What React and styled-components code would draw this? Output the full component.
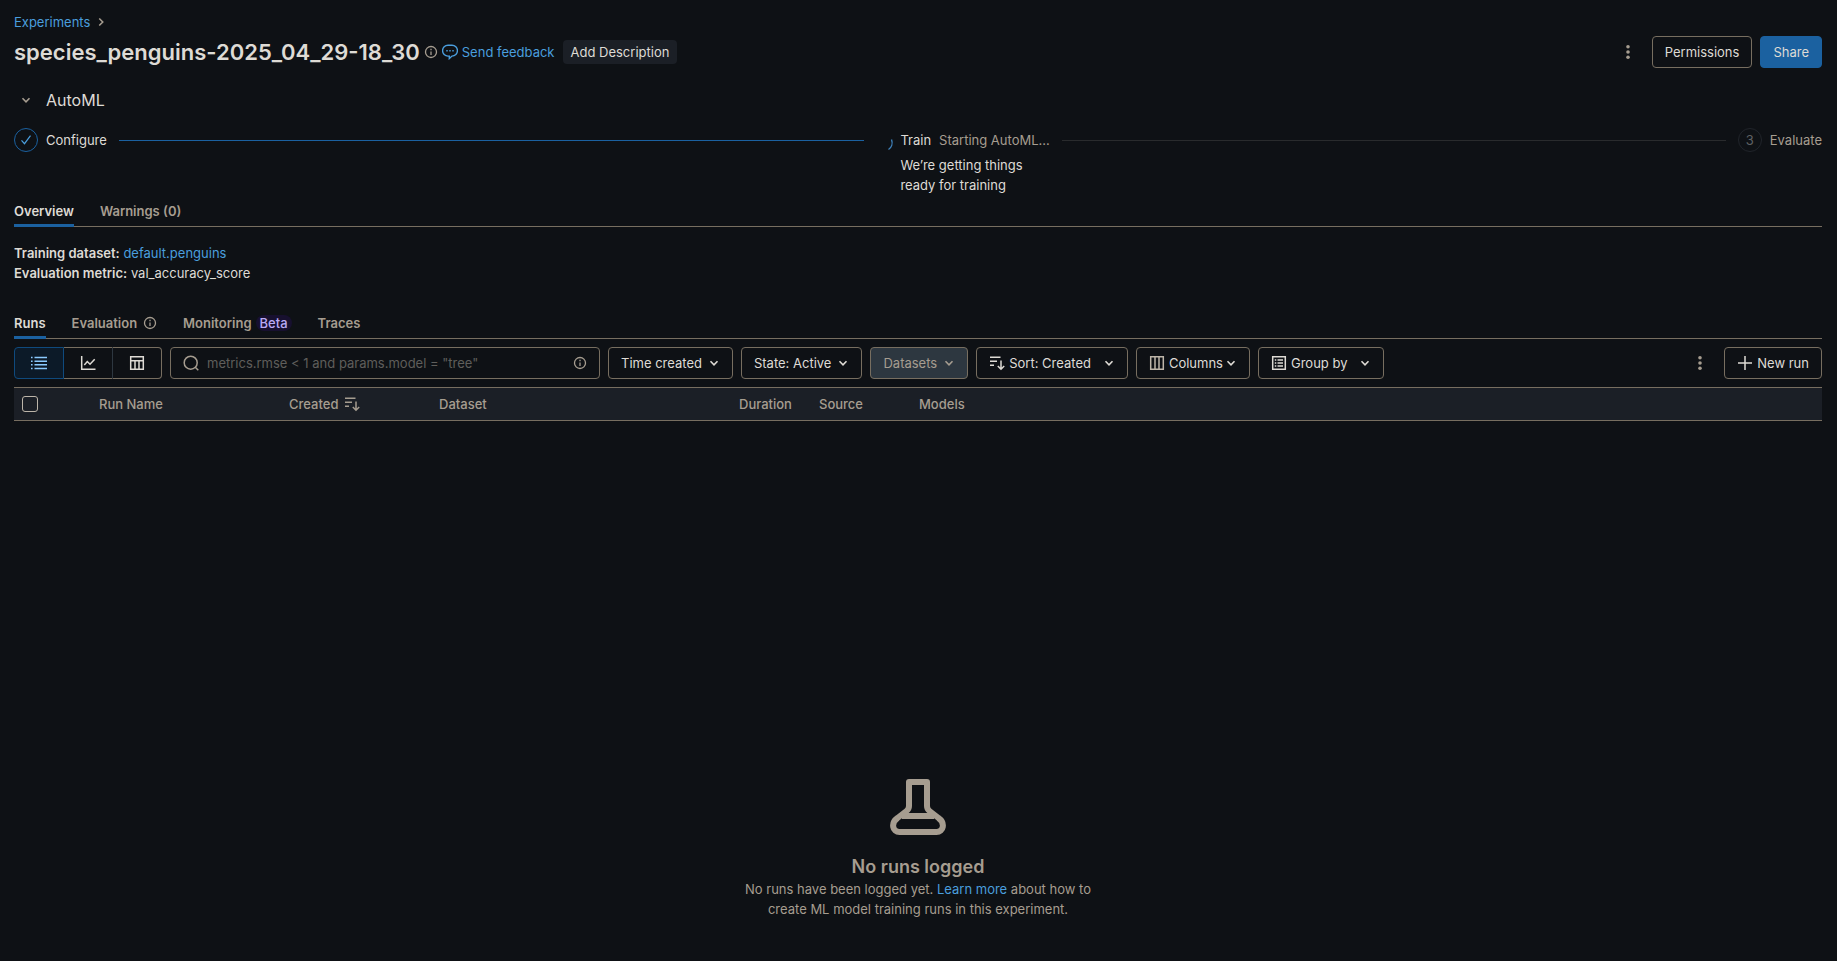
import React from "react";
import styled, { createGlobalStyle } from "styled-components";

const c = {
  bg: "#0e1115",
  text: "#dedbd5",
  muted: "#a69d90",
  line: "#776e60",
  link: "#4a9edd",
  blue: "#1b61a0",
  header: "#1b1f26",
};

const Global = createGlobalStyle`
  *, *::before, *::after { box-sizing: border-box; }
  body {
    margin: 0;
    background: ${c.bg};
    color: ${c.text};
    font: 400 13px/20px Inter, "Liberation Sans", sans-serif;
  }
  h1, h2, p, ol { margin: 0; padding: 0; }
  button, input { font: inherit; color: inherit; }
  svg { display: block; flex: none; }
`;

const Page = styled.div`
  min-height: 100vh;
  display: flex;
  flex-direction: column;
  padding: 12px 15px 0 14px;
`;

const Link = styled.a`
  color: ${c.link};
  text-decoration: none;
`;

const Breadcrumb = styled.nav`
  display: flex;
  align-items: center;
  gap: 4px;
  height: 20px;
  color: ${c.muted};
`;

const TitleRow = styled.header`
  display: flex;
  align-items: center;
  height: 32px;
  margin-top: 4px;
`;

const Title = styled.h1`
  font-size: 22px;
  line-height: 28px;
  font-weight: 600;
  margin-right: 4px;
  white-space: nowrap;
`;

const TitleInfo = styled.span`
  color: ${c.muted};
`;

const FeedbackLink = styled(Link)`
  display: flex;
  align-items: center;
  gap: 4px;
  margin: 0 8px 0 4px;
`;

const Spacer = styled.div`
  flex: 1;
`;

const Button = styled.button`
  display: inline-flex;
  align-items: center;
  justify-content: center;
  gap: 4px;
  height: 32px;
  padding: 0 12px;
  border: 1px solid ${(p) => (p.$primary ? c.blue : c.line)};
  border-radius: 4px;
  background: ${(p) => (p.$primary ? c.blue : "transparent")};
  white-space: nowrap;
  cursor: pointer;
  &:disabled {
    background: #2d3740;
    color: ${c.muted};
    cursor: default;
  }
`;

const DescriptionButton = styled(Button)`
  height: 24px;
  padding: 0 8px;
  border: 0;
  background: ${c.header};
`;

const MenuLabel = styled.span`
  display: flex;
  align-items: center;
  gap: ${(p) => p.$gap}px;
`;

const IconButton = styled.button`
  display: flex;
  align-items: center;
  justify-content: center;
  width: 32px;
  height: 32px;
  padding: 0;
  border: 0;
  background: none;
  color: ${c.muted};
`;

const Actions = styled.div`
  display: flex;
  gap: 8px;
`;

const SectionToggle = styled.button`
  display: flex;
  align-items: center;
  gap: 14px;
  height: 24px;
  margin-top: 20px;
  padding: 0 0 0 6px;
  border: 0;
  background: none;
  align-self: flex-start;
  > svg { color: ${c.muted}; }
`;

const SectionTitle = styled.span`
  font-size: 16px;
  line-height: 24px;
`;

const Steps = styled.ol`
  display: flex;
  list-style: none;
  margin-top: 16px;
  height: 68px;
`;

const Step = styled.li`
  display: flex;
  flex: ${(p) => (p.$last ? "0 0 auto" : `${p.$share} 1 0`)};
  min-width: 0;
`;

const markBorder = { done: c.blue, busy: "transparent", waiting: "#20242a" };
const markColor = { done: c.link, busy: "#3f82bb", waiting: "#5e6164" };

const StepMark = styled.div`
  display: flex;
  flex: none;
  align-items: center;
  justify-content: center;
  width: 24px;
  height: 24px;
  margin-right: 8px;
  border: 1px solid ${(p) => markBorder[p.$state]};
  border-radius: 50%;
  color: ${(p) => markColor[p.$state]};
`;

const StepBody = styled.div`
  flex: 1;
  min-width: 0;
`;

const StepHead = styled.div`
  display: flex;
  align-items: center;
  height: 24px;
  white-space: nowrap;
  color: ${(p) => (p.$muted ? c.muted : c.text)};
`;

const StepLine = styled.div`
  flex: 1;
  height: 1px;
  margin: 0 ${(p) => (p.$done ? 4 : 12)}px 0 12px;
  background: ${(p) => (p.$done ? c.blue : "#292b2d")};
`;

const StepStatus = styled.span`
  margin-left: 8px;
  color: ${c.muted};
`;

const StepNote = styled.p`
  width: 140px;
  margin-top: 3px;
`;

const Tabs = styled.div`
  display: flex;
  gap: 26px;
  height: 28px;
  margin-top: ${(p) => p.$top}px;
  border-bottom: 1px solid ${c.line};
`;

const Tab = styled.button`
  display: flex;
  align-items: flex-start;
  gap: ${(p) => p.$gap ?? 6}px;
  height: 28px;
  padding: 2px 0 0;
  border: 0;
  border-bottom: 3px solid ${(p) => (p.$active ? c.blue : "transparent")};
  background: none;
  font-weight: 600;
  color: ${(p) => (p.$active ? c.text : c.muted)};
  white-space: nowrap;
  > svg { margin-top: 3px; }
`;

const BetaTag = styled.span`
  height: 16px;
  margin-top: 2px;
  padding: 0 4px;
  border-radius: 8px;
  background: #17102f;
  color: #b9aaf5;
  font-weight: 500;
  line-height: 16px;
`;

const Facts = styled.div`
  margin-top: 16px;
  strong { font-weight: 600; }
`;

const Toolbar = styled.div`
  display: flex;
  gap: 8px;
  margin-top: 8px;
`;

const ViewGroup = styled.div`
  display: flex;
  width: 148px;
`;

const ViewButton = styled.button`
  display: flex;
  flex: 1;
  align-items: center;
  justify-content: center;
  height: 32px;
  padding: 0;
  border: 1px solid ${c.line};
  border-left-color: #2d3740;
  background: transparent;
  &:first-child { border-radius: 4px 0 0 4px; }
  &:last-child { border-radius: 0 4px 4px 0; }
  &:not(:last-child) { border-right: 0; }
  &&[aria-pressed="true"] {
    border: 1px solid #0f4a7d;
    background: #0c1a28;
    color: #8acaff;
  }
  &[aria-pressed="true"] + & { border-left: 0; }
`;

const SearchBox = styled.label`
  display: flex;
  align-items: center;
  gap: 8px;
  width: 430px;
  height: 32px;
  padding: 0 12px;
  border: 1px solid ${c.line};
  border-radius: 4px;
  color: ${c.muted};
`;

const SearchInput = styled.input`
  flex: 1;
  min-width: 0;
  padding: 0;
  border: 0;
  outline: 0;
  background: none;
  color: ${c.text};
  &::placeholder { color: #5f5e5b; opacity: 1; }
`;

const RunsTable = styled.table`
  width: 100%;
  margin-top: 8px;
  table-layout: fixed;
  border-collapse: collapse;
  background: ${c.header};
`;

const HeadCell = styled.th`
  width: ${(p) => (p.$w ? `${p.$w}px` : "auto")};
  height: 33px;
  padding: 0;
  border: solid ${c.line};
  border-width: 1px 0;
  text-align: left;
  font-weight: 500;
  color: ${c.muted};
`;

const CellContent = styled.div`
  display: flex;
  align-items: center;
  gap: 6px;
`;

const Checkbox = styled.input`
  appearance: none;
  display: block;
  width: 16px;
  height: 16px;
  margin: 0 0 0 8px;
  border: 1px solid #bdb5a9;
  border-radius: 3px;
`;

const Empty = styled.section`
  display: flex;
  flex: 1;
  flex-direction: column;
  align-items: center;
  justify-content: flex-end;
  padding-bottom: 42px;
  color: ${c.muted};
  text-align: center;
`;

const EmptyTitle = styled.h2`
  margin-top: 20px;
  font-size: 18px;
  line-height: 24px;
  font-weight: 600;
`;

const EmptyText = styled.p`
  width: 352px;
`;

const Svg = ({ size = 16, children, ...rest }) => (
  <svg width={size} height={size} viewBox="0 0 16 16" fill="none" stroke="currentColor" strokeWidth="1.5" aria-hidden="true" {...rest}>
    {children}
  </svg>
);

const Chevron = () => (
  <svg width="12" height="16" viewBox="0 0 12 16" fill="none" stroke="currentColor" strokeWidth="1.6" aria-hidden="true">
    <path d="M2.5 6.3 6 9.8l3.5-3.5" />
  </svg>
);
const ChevronRight = () => (
  <Svg size={14} strokeWidth="1.8">
    <path d="M6 4 10 8 6 12" />
  </Svg>
);
const Info = () => (
  <Svg size={14}>
    <circle cx="8" cy="8" r="6.3" />
    <path d="M8 7.3v4M8 4.4v1.7" />
  </Svg>
);
const Kebab = () => (
  <Svg fill="currentColor" stroke="none">
    <circle cx="8" cy="2.7" r="1.8" />
    <circle cx="8" cy="8" r="1.8" />
    <circle cx="8" cy="13.3" r="1.8" />
  </Svg>
);
const Speech = () => (
  <Svg strokeWidth="1.4">
    <path d="M6 1.2h4a5.2 5.2 0 0 1 0 10.9L7.3 14.6v-2.5H6A5.2 5.2 0 0 1 6 1.2Z" />
    <path d="M4.3 6.7h1.4M7.3 6.7h1.4M10.3 6.7h1.4" />
  </Svg>
);
const Check = () => (
  <Svg strokeWidth="1.2">
    <path d="m3.5 8.3 3 3.4 6-8" />
  </Svg>
);
const Spinner = () => (
  <svg width="28" height="24" viewBox="0 0 28 24" fill="none" stroke="currentColor" strokeWidth="1.4" aria-hidden="true">
    <path d="M25.5 11.5C27 15.5 25.5 19.5 22.5 21.5" />
  </svg>
);
const ListIcon = () => (
  <Svg strokeWidth="1.4">
    <path d="M3.5 2.5H16M3.5 6.2H16M3.5 9.8H16M3.5 13.5H16M0 2.5h1.6M0 6.2h1.6M0 9.8h1.6M0 13.5h1.6" />
  </Svg>
);
const ChartIcon = () => (
  <Svg>
    <path d="M1.7 1v13.3H15.5M4.3 10l3-3.5 2.7 2.7 4.7-5" />
  </Svg>
);
const TableIcon = () => (
  <Svg>
    <path d="M1.7 1.7h12.6v12.6H1.7ZM1.7 5.7h12.6M6 5.7v8.6M10 5.7v8.6" />
  </Svg>
);
const SearchIcon = () => (
  <Svg>
    <circle cx="7.7" cy="7.7" r="6.5" />
    <path d="m12.3 12.3 3 3" />
  </Svg>
);
const SortIcon = () => (
  <Svg>
    <path d="M1 2.2h10.5M1 6.2h7M1 10.2h4M12 5.5v8.5M8.8 11l3.2 3.2 3.2-3.2" />
  </Svg>
);
const ColumnsIcon = () => (
  <Svg color="#bdb5a9">
    <path d="M1.7 1.7h12.6v12.6H1.7ZM6 1.7v12.6M10 1.7v12.6" />
  </Svg>
);
const GroupIcon = () => (
  <Svg>
    <path d="M1.7 1.7h12.6v12.6H1.7ZM6.5 5H12M6.5 8H12M6.5 11H12M3.8 5h1.5M3.8 8h1.5M3.8 11h1.5" />
  </Svg>
);
const Plus = () => (
  <Svg>
    <path d="M8 1v14M1 8h14" />
  </Svg>
);
const Flask = () => (
  <svg width="56" height="56" viewBox="0 0 56 56" fill="none" stroke="currentColor" strokeWidth="6" strokeLinejoin="round" aria-hidden="true">
    <path d="M19 3h18v24q0 3 2.5 5l9 7c7 5 5 14-2 14H9.5C2.5 53 .5 44 7.5 39l9-7q2.5-2 2.5-5Z" />
    <path d="M12 37h32" />
  </svg>
);

const MenuButton = ({ icon, label, gap, ...rest }) => (
  <Button aria-haspopup="menu" {...rest}>
    {icon}
    <MenuLabel $gap={gap}>
      {label}
      <Chevron />
    </MenuLabel>
  </Button>
);

const columns = [
  ["Run Name", 190],
  ["Created", 150],
  ["Dataset", 300],
  ["Duration", 80],
  ["Source", 100],
  ["Models", null],
];

export default function App() {
  return (
    <>
      <Global />
      <Page>
        <Breadcrumb aria-label="Breadcrumb">
          <Link href="#experiments">Experiments</Link>
          <ChevronRight />
        </Breadcrumb>
        <TitleRow>
          <Title>species_penguins-2025_04_29-18_30</Title>
          <TitleInfo><Info /></TitleInfo>
          <FeedbackLink href="#feedback"><Speech />Send feedback</FeedbackLink>
          <DescriptionButton>Add Description</DescriptionButton>
          <Spacer />
          <Actions>
            <IconButton aria-label="More actions"><Kebab /></IconButton>
            <Button>Permissions</Button>
            <Button $primary>Share</Button>
          </Actions>
        </TitleRow>

        <SectionToggle aria-expanded="true">
          <Chevron />
          <SectionTitle>AutoML</SectionTitle>
        </SectionToggle>
        <Steps>
          <Step $share={854}>
            <StepMark $state="done"><Check /></StepMark>
            <StepBody>
              <StepHead>Configure<StepLine $done /></StepHead>
            </StepBody>
          </Step>
          <Step $share={869}>
            <StepMark $state="busy"><Spinner /></StepMark>
            <StepBody>
              <StepHead>Train<StepStatus>Starting AutoML...</StepStatus><StepLine /></StepHead>
              <StepNote>We’re getting things ready for training</StepNote>
            </StepBody>
          </Step>
          <Step $last>
            <StepMark $state="waiting">3</StepMark>
            <StepHead $muted>Evaluate</StepHead>
          </Step>
        </Steps>

        <Tabs role="tablist" $top={3}>
          <Tab role="tab" aria-selected="true" $active>Overview</Tab>
          <Tab role="tab">Warnings (0)</Tab>
        </Tabs>
        <Facts>
          <div><strong>Training dataset:</strong> <Link href="#dataset">default.penguins</Link></div>
          <div><strong>Evaluation metric:</strong> val_accuracy_score</div>
        </Facts>

        <Tabs role="tablist" $top={28}>
          <Tab role="tab" aria-selected="true" $active>Runs</Tab>
          <Tab role="tab">Evaluation<Info /></Tab>
          <Tab role="tab" $gap={4}>Monitoring<BetaTag>Beta</BetaTag></Tab>
          <Tab role="tab">Traces</Tab>
        </Tabs>
        <Toolbar>
          <ViewGroup>
            <ViewButton aria-pressed="true" aria-label="List view"><ListIcon /></ViewButton>
            <ViewButton aria-pressed="false" aria-label="Chart view"><ChartIcon /></ViewButton>
            <ViewButton aria-pressed="false" aria-label="Table view"><TableIcon /></ViewButton>
          </ViewGroup>
          <SearchBox>
            <SearchIcon />
            <SearchInput aria-label="Search runs" placeholder={'metrics.rmse < 1 and params.model = "tree"'} />
            <Info />
          </SearchBox>
          <MenuButton label="Time created" gap={6} />
          <MenuButton label="State: Active" gap={6} />
          <MenuButton label="Datasets" gap={6} disabled />
          <MenuButton icon={<SortIcon />} label="Sort: Created" gap={12} />
          <MenuButton icon={<ColumnsIcon />} label="Columns" gap={2} />
          <MenuButton icon={<GroupIcon />} label="Group by" gap={12} />
          <Spacer />
          <IconButton aria-label="More options"><Kebab /></IconButton>
          <Button><Plus />New run</Button>
        </Toolbar>
        <RunsTable>
          <thead>
            <tr>
              <HeadCell $w={85}><Checkbox type="checkbox" aria-label="Select all runs" /></HeadCell>
              {columns.map(([name, w]) => (
                <HeadCell key={name} $w={w} scope="col">
                  <CellContent>{name}{name === "Created" && <SortIcon />}</CellContent>
                </HeadCell>
              ))}
            </tr>
          </thead>
        </RunsTable>

        <Empty>
          <Flask />
          <EmptyTitle>No runs logged</EmptyTitle>
          <EmptyText>
            No runs have been logged yet. <Link href="#learn">Learn more</Link> about how to create ML model training runs in this experiment.
          </EmptyText>
        </Empty>
      </Page>
    </>
  );
}
